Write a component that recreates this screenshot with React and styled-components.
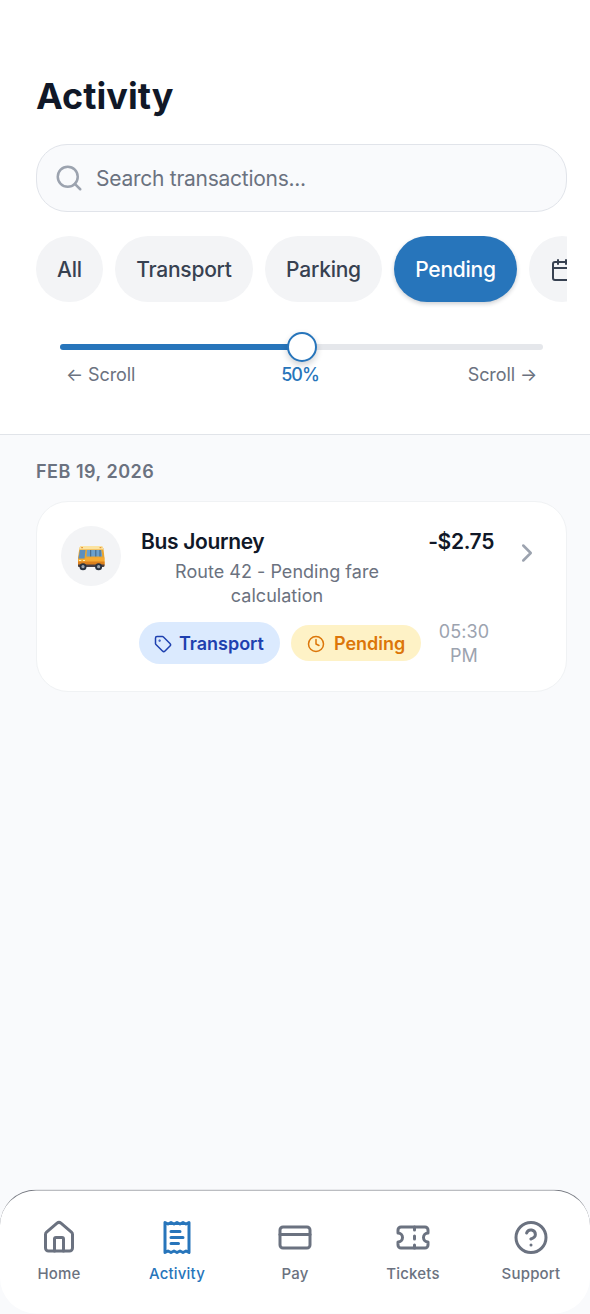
import React from "react";
import styled, { createGlobalStyle, css } from "styled-components";
import { Search, Calendar, ChevronRight, Tag, Clock, House, CreditCard } from "lucide-react";

const BLUE = "#2775bb";

const GlobalStyle = createGlobalStyle`
  *, *::before, *::after { box-sizing: border-box; }
  body { margin: 0; background: #f9fafb; }
  button { font: inherit; border: 0; margin: 0; padding: 0; background: none; color: inherit; }
`;

const Screen = styled.div`
  display: flex;
  flex-direction: column;
  height: 1314px;
  width: 590px;
  overflow: hidden;
  background: #f9fafc;
  font-family: Inter, "Liberation Sans", sans-serif;
  color: #101828;
`;

const Header = styled.header`
  display: flex;
  flex-direction: column;
  height: 435px;
  padding: 72px 23px 0 36px;
  background: #fff;
  border-bottom: 1px solid #e1e4e9;
`;

const Title = styled.h1`
  margin: 0 0 24px;
  font-size: 36px;
  line-height: 48px;
  font-weight: 700;
  letter-spacing: 0.05px;
`;

const SearchBox = styled.label`
  display: flex;
  align-items: center;
  gap: 12px;
  height: 68px;
  flex: none;
  padding: 0 17px;
  border: 1px solid #e1e4ea;
  border-radius: 31px;
  background: #f9fafc;
  color: #9ca3af;
`;

const SearchInput = styled.input`
  flex: 1;
  min-width: 0;
  padding: 2px 0 0;
  border: 0;
  outline: 0;
  background: transparent;
  font: 400 21px/30px Inter, sans-serif;
  letter-spacing: -0.26px;
  &::placeholder { color: #6b7280; opacity: 1; }
`;

const Chips = styled.div`
  display: flex;
  flex: none;
  gap: 12px;
  height: 78px;
  margin-top: 24px;
  overflow: hidden;
`;

const Chip = styled.button`
  display: flex;
  align-items: center;
  justify-content: center;
  gap: 9px;
  flex: none;
  width: ${(p) => p.$width}px;
  height: 66px;
  padding-top: 1px;
  border-radius: 33px;
  background: #f3f4f6;
  color: #374151;
  font-size: 21px;
  font-weight: 500;
  letter-spacing: -0.24px;
  ${(p) => p.$active && css`
    background: ${BLUE};
    color: #fff;
    box-shadow: 0 2px 4px rgba(16, 24, 40, 0.2);
  `}
`;

const SliderArea = styled.div`
  display: flex;
  flex-direction: column;
  padding: 18px 24px 0;
`;

const Track = styled.div`
  display: flex;
  align-items: center;
  height: 30px;
`;

const Fill = styled.div`
  flex: 1;
  height: 6px;
  border-radius: 3px 0 0 3px;
  background: ${BLUE};
`;

const Rest = styled(Fill)`
  border-radius: 0 3px 3px 0;
  background: #e5e7eb;
`;

const Thumb = styled.div`
  z-index: 1;
  width: 30px;
  height: 30px;
  margin: 0 -2px;
  border: 2px solid ${BLUE};
  border-radius: 50%;
  background: #fff;
  box-shadow: 0 3px 6px rgba(16, 24, 40, 0.2);
`;

const SliderLabels = styled.div`
  display: flex;
  justify-content: space-between;
  padding: 0 6px;
  font-size: 18px;
  line-height: 26px;
  letter-spacing: -0.1px;
  color: #6b7280;
`;

const Percent = styled.span`
  padding-right: 3px;
  color: ${BLUE};
  font-weight: 500;
  letter-spacing: -1px;
`;

const Content = styled.main`
  display: flex;
  flex: 1;
  flex-direction: column;
  padding: 24px 23px 0 36px;
`;

const DateHeading = styled.h2`
  margin: 0 0 16px;
  font-size: 18px;
  line-height: 26px;
  font-weight: 600;
  letter-spacing: 0.5px;
  color: #6b7280;
`;

const Card = styled.button`
  display: flex;
  align-items: flex-start;
  height: 191px;
  padding: 24px 24px 0;
  border: 1px solid #f0f2f4;
  border-radius: 32px;
  background: #fff;
`;

const Avatar = styled.span`
  display: flex;
  align-items: center;
  justify-content: center;
  flex: none;
  width: 60px;
  height: 60px;
  padding-top: 3px;
  border-radius: 50%;
  background: #f3f4f6;
`;

const Details = styled.span`
  display: flex;
  flex: none;
  flex-direction: column;
  width: 356px;
  margin-left: 18px;
`;

const TopLine = styled.span`
  display: flex;
  justify-content: space-between;
  padding: 0 1px 0 2px;
  font-size: 21px;
  line-height: 32px;
  font-weight: 600;
  letter-spacing: -0.34px;
  color: #101828;
`;

const Description = styled.span`
  width: 276px;
  margin-top: 2px;
  font-size: 18px;
  line-height: 24px;
  font-weight: 400;
  letter-spacing: 0.03px;
  text-align: center;
  color: #6b7280;
`;

const Meta = styled.span`
  display: flex;
  align-items: flex-start;
  margin-top: 12px;
`;

const Badge = styled.span`
  display: flex;
  align-items: center;
  flex: none;
  gap: ${(p) => (p.$pending ? 9 : 7)}px;
  width: ${(p) => (p.$pending ? 130 : 141)}px;
  height: ${(p) => (p.$pending ? 36 : 42)}px;
  margin-top: ${(p) => (p.$pending ? 5 : 2)}px;
  margin-right: ${(p) => (p.$pending ? 15 : 11)}px;
  padding: ${(p) => (p.$pending ? "1px 0 0 16px" : "1px 0 0 15px")};
  border-radius: 21px;
  background: ${(p) => (p.$pending ? "#fef2c6" : "#dbeafe")};
  color: ${(p) => (p.$pending ? "#dc7609" : "#1e40af")};
  font-size: 18px;
  font-weight: 600;
  letter-spacing: -0.03px;
`;

const Time = styled.span`
  width: 56px;
  font-size: 18px;
  line-height: 24px;
  letter-spacing: 0.15px;
  text-align: center;
  color: #9ca3af;
`;

const Chevron = styled(ChevronRight)`
  flex: none;
  margin: 12px 0 0 17px;
  color: #9ca3af;
`;

const BottomNav = styled.nav`
  display: grid;
  grid-template-columns: repeat(5, 1fr);
  height: 124px;
  margin-bottom: 1px;
  padding-top: 29px;
  border-top: 1px solid #777a82;
  border-radius: 36px;
  background: #fff;
  transform: translateY(0.5px);
`;

const NavItem = styled.a`
  display: flex;
  flex-direction: column;
  align-items: center;
  gap: 8px;
  font-size: 15px;
  line-height: 20px;
  font-weight: 500;
  letter-spacing: 0.2px;
  color: ${(p) => (p.$active ? BLUE : "#6b7280")};
`;

const Stroke = ({ children }) => (
  <svg width="36" height="36" viewBox="0 0 24 24" fill="none" stroke="currentColor" strokeWidth="2" strokeLinecap="round" strokeLinejoin="round">
    {children}
  </svg>
);

const ReceiptIcon = () => (
  <Stroke>
    <path d="M4 2v20l2-1 2 1 2-1 2 1 2-1 2 1 2-1 2 1V2l-2 1-2-1-2 1-2-1-2 1-2-1-2 1Z" />
    <path d="M14 8H8M16 12H8M13 16H8" />
  </Stroke>
);

const TicketIcon = () => (
  <Stroke>
    <path d="M2 9a3 3 0 0 1 0 6v2a2 2 0 0 0 2 2h16a2 2 0 0 0 2-2v-2a3 3 0 0 1 0-6V7a2 2 0 0 0-2-2H4a2 2 0 0 0-2 2Z" />
    <path d="M13 5v2M13 17v2M13 11v2" />
  </Stroke>
);

const HelpIcon = () => (
  <Stroke>
    <circle cx="12" cy="12" r="10" />
    <path d="M9.09 9a3 3 0 0 1 5.83 1c0 2-3 3-3 3M12 17h.01" />
  </Stroke>
);

const BusIcon = () => (
  <svg width="28" height="26" viewBox="0 0 28 26">
    <path d="M2.4 3Q3 1 5.5 1H23.5Q26 1 26.4 3.5L27.5 13V20Q27.5 22 26 22H2Q1 22 1 20V13Z" fill="#eaa52f" />
    <path d="M2.2 4Q2.4 1 5 1H24Q26 1 26.3 4.5H2.2Z" fill="#fbe3a0" />
    <path d="M3 5H8.5L7.5 13.5H1.4Z" fill="#5d8fbe" />
    <path d="M10 5H24.3L25.3 11.5H9.4Z" fill="#6ba0cd" />
    <path d="M13.7 5V11.5M18.8 5V11.5M23 5V11.5" stroke="#38536b" strokeWidth=".8" />
    <path d="M1 14H8L9.5 12.5H27.3V19H1Z" fill="#f6aa32" />
    <path d="M1 16.5H27.5V20H1Z" fill="#dc811e" />
    <path d="M1 19.5H27.5V20.5Q27.5 22 26 22H2Q1 22 1 20.5Z" fill="#493f43" />
    <path d="M2 15.5H4.2M6 15.5H8" stroke="#fff0b0" strokeWidth="1.2" />
    <circle cx="6" cy="21.7" r="3.5" fill="#293240" />
    <circle cx="21.6" cy="21.7" r="3.5" fill="#293240" />
    <circle cx="6" cy="21.7" r="1.6" fill="#9da6b1" />
    <circle cx="21.6" cy="21.7" r="1.6" fill="#9da6b1" />
    <path d="M4.2 2.7H6M22.6 2.7H24.4" stroke="#e18727" />
  </svg>
);

export default function App() {
  return (
    <Screen>
      <GlobalStyle />
      <Header>
        <Title>Activity</Title>
        <SearchBox>
          <Search size={30} />
          <SearchInput placeholder="Search transactions..." />
        </SearchBox>
        <Chips>
          <Chip $width={67}>All</Chip>
          <Chip $width={138}>Transport</Chip>
          <Chip $width={117}>Parking</Chip>
          <Chip $width={123} $active>Pending</Chip>
          <Chip $width={66} aria-label="Date"><Calendar size={24} /></Chip>
        </Chips>
        <SliderArea>
          <Track><Fill /><Thumb /><Rest /></Track>
          <SliderLabels>
            <span>← Scroll</span>
            <Percent>50%</Percent>
            <span>Scroll →</span>
          </SliderLabels>
        </SliderArea>
      </Header>
      <Content>
        <DateHeading>FEB 19, 2026</DateHeading>
        <Card>
          <Avatar><BusIcon /></Avatar>
          <Details>
            <TopLine><span>Bus Journey</span><span>-$2.75</span></TopLine>
            <Description>Route 42 - Pending fare calculation</Description>
            <Meta>
              <Badge><Tag size={18} />Transport</Badge>
              <Badge $pending><Clock size={18} />Pending</Badge>
              <Time>05:30 PM</Time>
            </Meta>
          </Details>
          <Chevron size={30} />
        </Card>
      </Content>
      <BottomNav>
        <NavItem><House size={36} />Home</NavItem>
        <NavItem $active><ReceiptIcon />Activity</NavItem>
        <NavItem><CreditCard size={36} />Pay</NavItem>
        <NavItem><TicketIcon />Tickets</NavItem>
        <NavItem><HelpIcon />Support</NavItem>
      </BottomNav>
    </Screen>
  );
}
